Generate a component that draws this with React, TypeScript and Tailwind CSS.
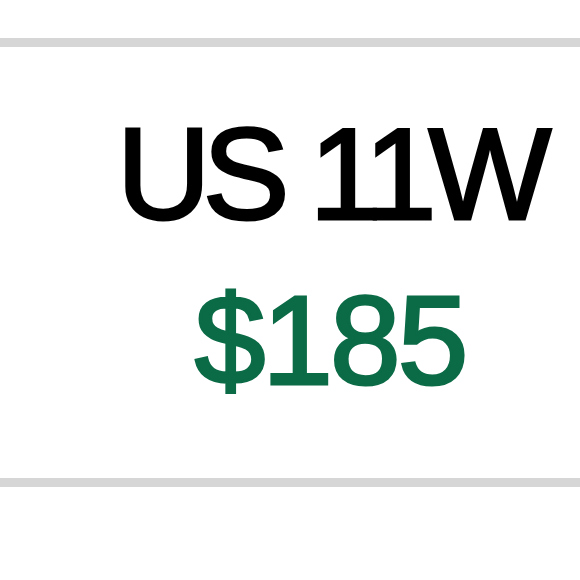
export default function App() {
  return (
    <div className="w-[580px] h-[580px] bg-white overflow-hidden pt-[38px]">
      <div
        className="h-[449px] border-y-[9px] border-[#d6d6d6] flex flex-col items-center pl-[80px] pt-[62px]"
        style={{ fontFamily: '"Liberation Sans", Arial, sans-serif' }}
      >
        {/* size label, thickened with a stroke for a medium weight */}
        <div className="text-[130px] leading-none text-black tracking-[-8px] [-webkit-text-stroke:3px_#000]">
          US 11W
        </div>
        <div className="mt-[38px] text-[127px] leading-none text-[#0b6b47] tracking-[-3px] [-webkit-text-stroke:3px_#0b6b47]">
          $185
        </div>
      </div>
    </div>
  );
}
